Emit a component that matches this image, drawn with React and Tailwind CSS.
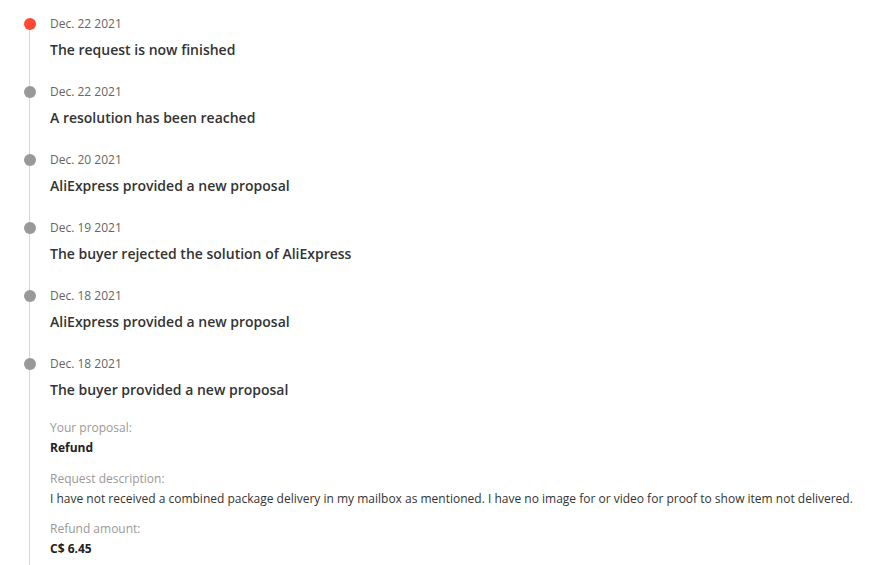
import React from 'react';

const EVENTS = [
  { date: 'Dec. 22 2021', title: 'The request is now finished', active: true },
  { date: 'Dec. 22 2021', title: 'A resolution has been reached' },
  { date: 'Dec. 20 2021', title: 'AliExpress provided a new proposal' },
  { date: 'Dec. 19 2021', title: 'The buyer rejected the solution of AliExpress' },
  { date: 'Dec. 18 2021', title: 'AliExpress provided a new proposal' },
  {
    date: 'Dec. 18 2021',
    title: 'The buyer provided a new proposal',
    details: [
      { label: 'Your proposal:', value: 'Refund', bold: true },
      {
        label: 'Request description:',
        value:
          'I have not received a combined package delivery in my mailbox as mentioned. I have no image for or video for proof to show item not delivered.',
        gap: 'mt-[11px]',
      },
      { label: 'Refund amount:', value: 'C$ 6.45', bold: true, gap: 'mt-[10px]' },
    ],
  },
];

function TimelineItem({ event }) {
  return (
    <div className="relative pb-[23px]">
      {/* dot */}
      <span
        className={`absolute left-[-26px] top-[3px] w-[12px] h-[12px] rounded-full ${
          event.active ? 'bg-[#ff4733]' : 'bg-[#999]'
        }`}
      />
      <div className="text-[12px] leading-[18px] text-[#666]">{event.date}</div>
      <div className="mt-[7px] text-[14px] leading-[20px] font-semibold text-[#333]">
        {event.title}
      </div>

      {event.details && (
        <div className="mt-[18px]">
          {event.details.map((d) => (
            <div key={d.label} className={d.gap || ''}>
              <div className="text-[12px] leading-[20px] text-[#999]">{d.label}</div>
              <div
                className={`text-[12px] leading-[20px] ${
                  d.bold ? 'font-bold text-[#222]' : 'text-[#333]'
                }`}
              >
                {d.value}
              </div>
            </div>
          ))}
        </div>
      )}
    </div>
  );
}

export default function App() {
  return (
    <div
      className="w-[869px] h-[565px] overflow-hidden bg-white"
      style={{ fontFamily: '"Open Sans", "Noto Sans", sans-serif' }}
    >
      <div className="relative ml-[30px] pt-[15px] pl-[20px]">
        {/* vertical line */}
        <span className="absolute left-[-1px] top-[24px] bottom-[-40px] w-px bg-[#d6d6d6]" />
        {EVENTS.map((e, i) => (
          <TimelineItem key={i} event={e} />
        ))}
      </div>
    </div>
  );
}
